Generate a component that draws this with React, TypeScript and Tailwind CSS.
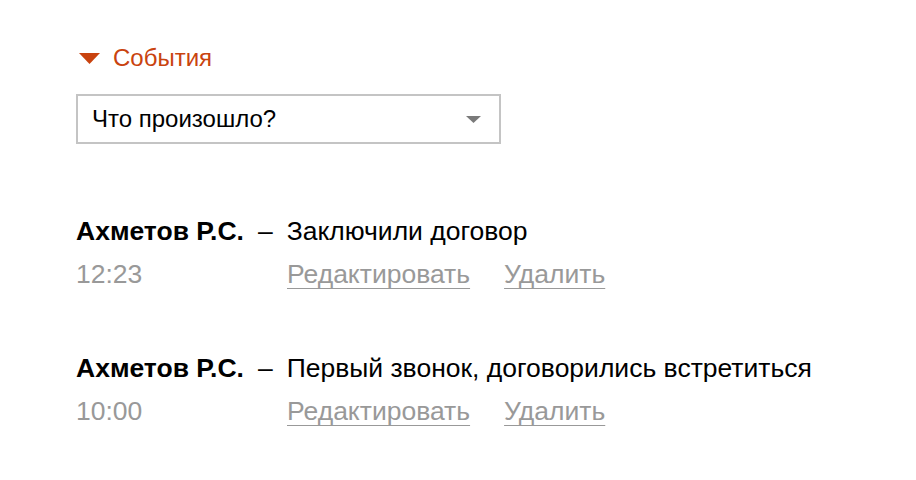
const entries = [
  { author: 'Ахметов Р.С.', text: 'Заключили договор', time: '12:23' },
  { author: 'Ахметов Р.С.', text: 'Первый звонок, договорились встретиться', time: '10:00' },
];

export default function App() {
  return (
    <div
      className="h-[480px] w-[916px] bg-white pl-[76px] pt-[43px] text-black"
      style={{ fontFamily: '"Liberation Sans", Arial, sans-serif' }}
    >
      <button className="flex items-center gap-[13px] pl-[3px] text-[24px] text-[#c9430f]">
        <svg width="21" height="11" viewBox="0 0 21 11">
          <path d="M0 0H21L10.5 11Z" fill="#c9430f" />
        </svg>
        <span className="leading-[30px]">События</span>
      </button>

      <div className="mt-[21px] flex h-[50px] w-[425px] items-center justify-between border-2 border-[#c4c4c4] pl-[14px] pr-[18px] text-[24px]">
        <span>Что произошло?</span>
        <svg width="15" height="7" viewBox="0 0 15 7">
          <path d="M0 0H15L7.5 7Z" fill="#7a7a7a" />
        </svg>
      </div>

      <div className="mt-[72px] flex flex-col gap-[64px] text-[26.5px]">
        {entries.map((e, i) => (
          <div key={i} className="flex flex-col gap-[13px]">
            <div className="leading-[30px]">
              <span className="font-bold">{e.author}</span>
              <span className="mx-[14px]">–</span>
              <span>{e.text}</span>
            </div>
            <div className="flex leading-[30px] text-[#999]">
              <span className="w-[211px]">{e.time}</span>
              <a className="cursor-pointer underline decoration-1 underline-offset-[5px]">Редактировать</a>
              <a className="ml-[34px] cursor-pointer underline decoration-1 underline-offset-[5px]">Удалить</a>
            </div>
          </div>
        ))}
      </div>
    </div>
  );
}
